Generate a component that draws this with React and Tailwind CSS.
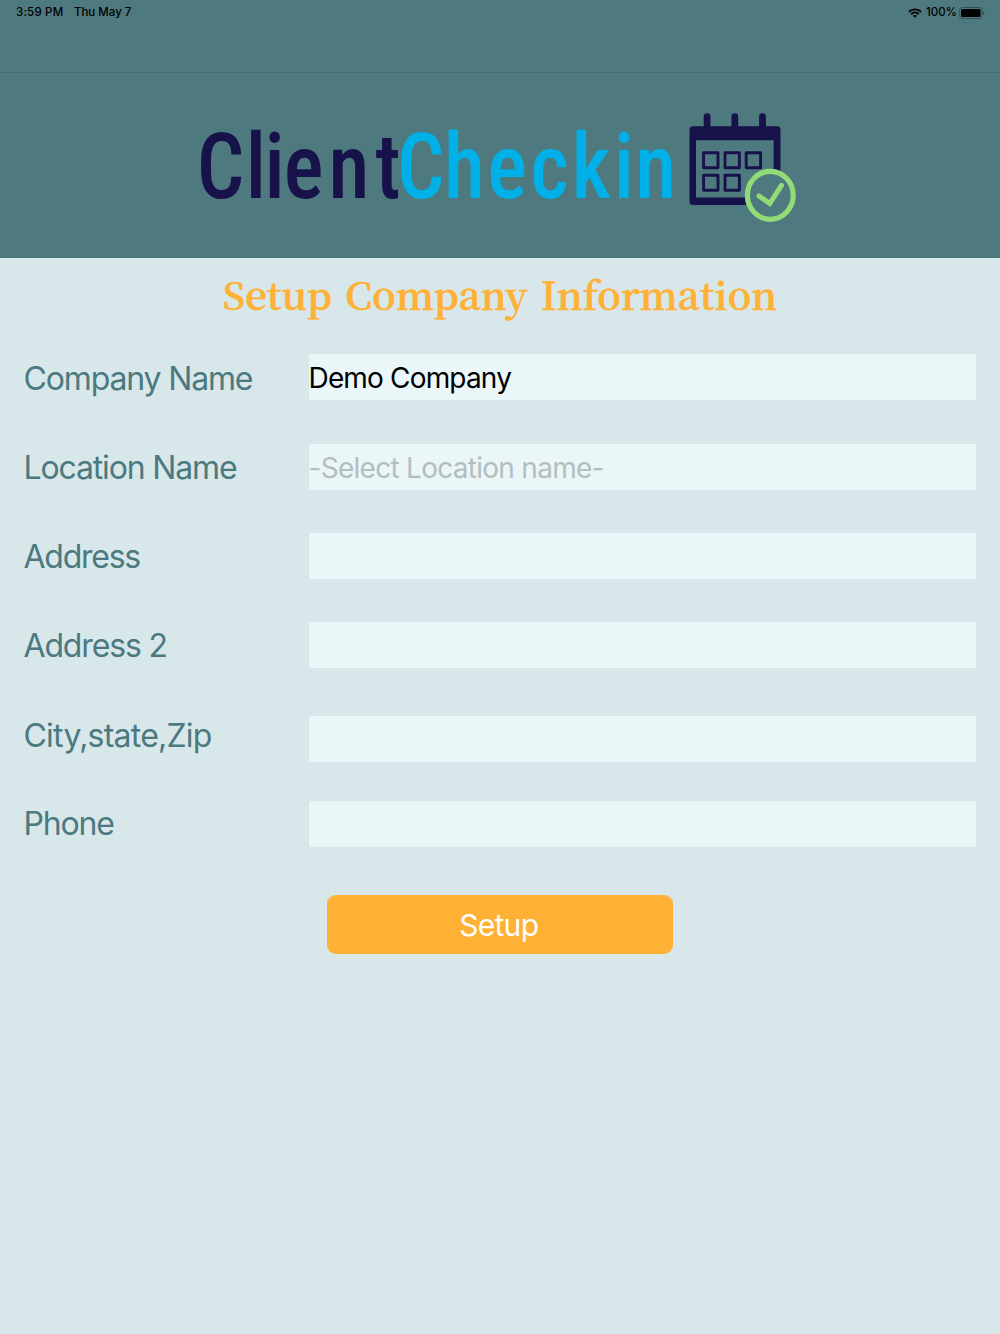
const FIELDS = [
  { label: 'Company Name', value: 'Demo Company', row: 'mt-[25px]', labelStyle: 'pt-[4px] tracking-[-1.15px]' },
  { label: 'Location Name', placeholder: '-Select Location name-', row: 'mt-11', labelStyle: 'pt-[2px] tracking-[-1.15px]' },
  { label: 'Address', row: 'mt-[43px]', labelStyle: 'pt-[2px] tracking-[-1.25px]' },
  { label: 'Address 2', row: 'mt-[43px]', labelStyle: 'pt-[2px] tracking-[-1.15px]' },
  { label: 'City,state,Zip', row: 'mt-12', labelStyle: 'pb-[6px] tracking-[-0.78px]' },
  { label: 'Phone', row: 'mt-[39px]', labelStyle: 'tracking-[-1.2px]' },
];

function WifiIcon() {
  return (
    <svg className="h-[10px] w-[14px]" viewBox="0 0 14 10" fill="none" stroke="#000" strokeWidth="1.9">
      <path d="M0.9 3.8C4.3 0.5 9.7 0.5 13.1 3.8" />
      <path d="M3.1 6.1C5.3 4 8.7 4 10.9 6.1" />
      <path d="M7 9.8 4.9 7.7C6.1 6.7 7.9 6.7 9.1 7.7Z" fill="#000" stroke="none" />
    </svg>
  );
}

function BatteryIcon() {
  return (
    <svg className="h-3 w-[26px]" viewBox="0 0 26 12" fill="none">
      <rect x="0.5" y="0.5" width="22.5" height="11" rx="3" stroke="#2b4347" strokeOpacity="0.75" />
      <rect x="2" y="2" width="19.5" height="8" rx="1.6" fill="#000" />
      <path d="M24.2 4.2c1.3.5 1.3 3.1 0 3.6z" fill="#2b4347" />
    </svg>
  );
}

function Logo() {
  return (
    <svg className="h-[112px] w-[600px]" viewBox="198 112 600 112" role="img" aria-label="ClientCheckin">
      <g
        fontFamily="'Roboto Condensed', Roboto, sans-serif"
        fontSize="91"
        fontWeight="470"
        transform="scale(0.92 1)"
      >
        <text y="198" x="214 267 287.5 308.5 357 408" fill="#18124a">Client</text>
        <text y="198" x="431.5 482.5 529.5 576.5 621.5 667 690.5" fill="#02b0e8">Checkin</text>
      </g>
      <g fill="#18124a">
        <rect x="703.7" y="113.3" width="6.8" height="18" rx="3.4" />
        <rect x="731.4" y="113.3" width="6.8" height="18" rx="3.4" />
        <rect x="759.1" y="113.3" width="6.8" height="18" rx="3.4" />
        <path
          fillRule="evenodd"
          d="M693 126.3H777a3.5 3.5 0 0 1 3.5 3.5V201.5a3.5 3.5 0 0 1-3.5 3.5H693a3.5 3.5 0 0 1-3.5-3.5V129.8a3.5 3.5 0 0 1 3.5-3.5ZM696 140.3V197.5H773.6V140.3Z"
        />
      </g>
      <ellipse cx="770.3" cy="195.3" rx="25.5" ry="26.5" fill="#4e797f" />
      <g fill="none" stroke="#18124a" strokeWidth="2.9" strokeLinejoin="round">
        <rect x="703.6" y="152.8" width="14.4" height="15" />
        <rect x="725" y="152.8" width="14.4" height="15" />
        <rect x="746.2" y="152.8" width="14.4" height="15" />
        <rect x="703.6" y="175.2" width="14.4" height="15" />
        <rect x="725" y="175.2" width="14.4" height="15" />
      </g>
      <g fill="none" stroke="#92dc78" strokeLinecap="round" strokeLinejoin="miter">
        <ellipse cx="770.3" cy="195.3" rx="22.9" ry="24" strokeWidth="5.2" />
        <path d="M759 196 769.8 203.5 781.5 185.3" strokeWidth="5" />
      </g>
    </svg>
  );
}

function StatusBar() {
  return (
    <div className="flex h-[25px] items-center justify-between pl-4 pr-[15px] text-[11.5px] font-medium leading-none text-black">
      <div className="flex gap-[10.5px] pt-px">
        <span className="tracking-[0.2px]">3:59 PM</span>
        <span>Thu May 7</span>
      </div>
      <div className="flex items-center">
        <WifiIcon />
        <span className="ml-[4px] pt-px">100%</span>
        <span className="ml-[2px]"><BatteryIcon /></span>
      </div>
    </div>
  );
}

function Field({ label, value, placeholder, row, labelStyle }) {
  return (
    <div className={`flex h-[46px] items-center ${row}`}>
      <label className={`w-[285px] shrink-0 whitespace-nowrap text-[32px] leading-[40px] text-[#4c7980] ${labelStyle}`}>
        {label}
      </label>
      <div className="flex h-full flex-1 items-center bg-[#eaf6f8] pt-[2px] text-[28px] leading-none">
        {value && <span className="tracking-[-0.83px] text-black">{value}</span>}
        {placeholder && <span className="tracking-[-0.72px] text-[#b3bebf]">{placeholder}</span>}
      </div>
    </div>
  );
}

export default function App() {
  return (
    <div className="min-h-[1334px] w-[1000px] bg-[#d8e7ea] font-['Inter',sans-serif]">
      <header className="h-[258px] bg-[#4e797f]">
        <div className="h-[73px] border-b border-[#436a70]">
          <StatusBar />
        </div>
        <div className="flex justify-center pt-[39px] pr-1">
          <Logo />
        </div>
      </header>
      <main>
        <h1 className="h-[71px] whitespace-nowrap pt-[6px] text-center font-['Noto_Serif_CJK_JP','Liberation_Serif',serif] text-[38.5px] font-semibold leading-[60px] text-[#feb134] [-webkit-text-stroke:0.6px_#feb134] [word-spacing:3.5px]">
          Setup Company Information
        </h1>
        <form className="flex flex-col pl-[23.5px] pr-6">
          {FIELDS.map((f) => (
            <Field key={f.label} {...f} />
          ))}
          <button
            type="button"
            className="mt-[48px] h-[59px] w-[346px] self-center rounded-[9px] bg-[#feb134] pr-[2px] text-[30px] leading-none tracking-[-0.7px] text-white"
          >
            Setup
          </button>
        </form>
      </main>
    </div>
  );
}
